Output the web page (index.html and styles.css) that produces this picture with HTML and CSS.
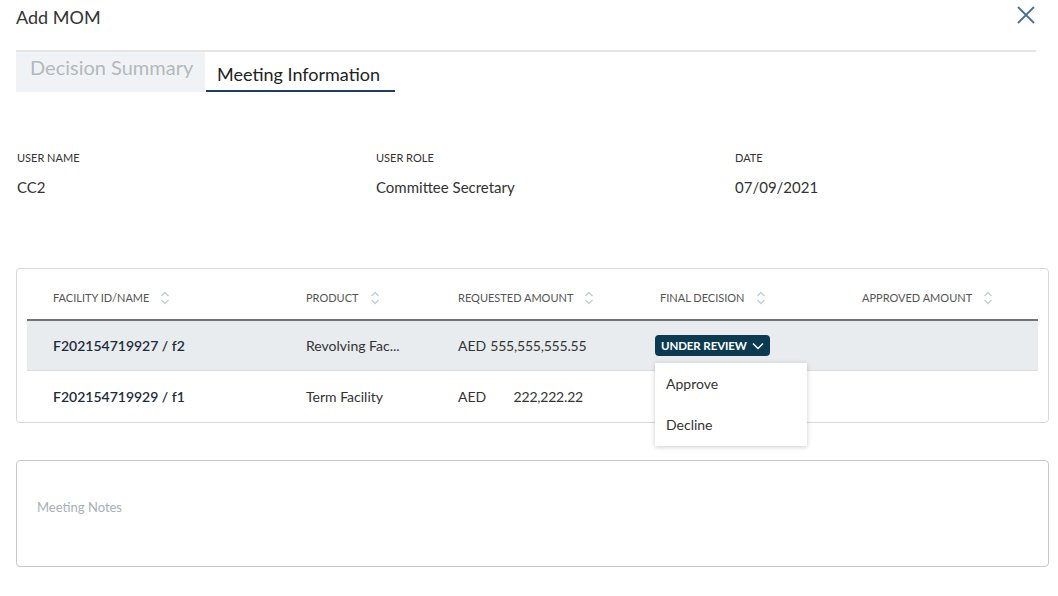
FILE: index.html
```html
<!DOCTYPE html>
<html>
<head>
<meta charset="utf-8">
<link rel="stylesheet" href="styles.css">
</head>
<body>
<div class="modal">
  <div class="header">
    <div class="title">Add MOM</div>
    <button class="close" aria-label="close">
      <svg width="20" height="20" viewBox="0 0 20 20"><path d="M2 2 L18 18 M18 2 L2 18" stroke="#4a6f98" stroke-width="1.8" fill="none"/></svg>
    </button>
  </div>
  <div class="tabs">
    <div class="tab tab-inactive">Decision Summary</div>
    <div class="tab tab-active">Meeting Information</div>
  </div>

  <div class="info">
    <div class="info-item"><div class="info-label">USER NAME</div><div class="info-value">CC2</div></div>
    <div class="info-item"><div class="info-label">USER ROLE</div><div class="info-value">Committee Secretary</div></div>
    <div class="info-item"><div class="info-label">DATE</div><div class="info-value">07/09/2021</div></div>
  </div>

  <div class="table-card">
    <div class="trow thead">
      <div class="th">FACILITY ID/NAME <span class="sort"><svg width="10" height="14" viewBox="0 0 10 14"><path d="M1.5 5 L5 1.5 L8.5 5 M1.5 9 L5 12.5 L8.5 9" stroke="#c3ccd6" stroke-width="1.4" fill="none"/></svg></span></div>
      <div class="th">PRODUCT <span class="sort"><svg width="10" height="14" viewBox="0 0 10 14"><path d="M1.5 5 L5 1.5 L8.5 5 M1.5 9 L5 12.5 L8.5 9" stroke="#c3ccd6" stroke-width="1.4" fill="none"/></svg></span></div>
      <div class="th">REQUESTED AMOUNT <span class="sort"><svg width="10" height="14" viewBox="0 0 10 14"><path d="M1.5 5 L5 1.5 L8.5 5 M1.5 9 L5 12.5 L8.5 9" stroke="#c3ccd6" stroke-width="1.4" fill="none"/></svg></span></div>
      <div class="th">FINAL DECISION <span class="sort"><svg width="10" height="14" viewBox="0 0 10 14"><path d="M1.5 5 L5 1.5 L8.5 5 M1.5 9 L5 12.5 L8.5 9" stroke="#c3ccd6" stroke-width="1.4" fill="none"/></svg></span></div>
      <div class="th">APPROVED AMOUNT <span class="sort"><svg width="10" height="14" viewBox="0 0 10 14"><path d="M1.5 5 L5 1.5 L8.5 5 M1.5 9 L5 12.5 L8.5 9" stroke="#c3ccd6" stroke-width="1.4" fill="none"/></svg></span></div>
    </div>
    <div class="trow tbody selected">
      <div class="td id">F202154719927 / f2</div>
      <div class="td">Revolving Fac...</div>
      <div class="td amount"><span class="cur">AED</span><span class="amt">555,555,555.55</span></div>
      <div class="td decision">
        <span class="badge">UNDER REVIEW <svg width="12" height="8" viewBox="0 0 12 8"><path d="M1 1.5 L6 6.5 L11 1.5" stroke="#ffffff" stroke-width="1.4" fill="none"/></svg></span>
        <div class="menu">
          <div class="menu-item">Approve</div>
          <div class="menu-item">Decline</div>
        </div>
      </div>
      <div class="td"></div>
    </div>
    <div class="trow tbody last">
      <div class="td id">F202154719929 / f1</div>
      <div class="td">Term Facility</div>
      <div class="td amount"><span class="cur">AED</span><span class="amt">222,222.22</span></div>
      <div class="td"></div>
      <div class="td"></div>
    </div>
  </div>

  <div class="notes">Meeting Notes</div>
</div>
</body>
</html>
```

FILE: styles.css
```css
* { box-sizing: border-box; }
body {
  margin: 0;
  background: #ffffff;
  font-family: "Lato", "Noto Sans", sans-serif;
  color: #333333;
}
.modal {
  width: 1058px;
  height: 596px;
  padding: 0 9px 0 16px;
}
.header {
  display: flex;
  justify-content: space-between;
  align-items: flex-start;
  width: 1020px;
  height: 52px;
  border-bottom: 2px solid #e4e4e4;
}
.title {
  font-size: 18px;
  line-height: 24px;
  padding-top: 5px;
  color: #333333;
}
.close {
  background: none;
  border: none;
  padding: 0;
  margin-top: 5px;
  width: 20px;
  height: 20px;
  cursor: pointer;
}
.tabs {
  display: flex;
  height: 40px;
}
.tab {
  width: 189px;
  height: 40px;
}
.tab-inactive {
  background: #f0f3f6;
  color: #b4b8bc;
  font-size: 20px;
  line-height: 20px;
  padding: 5px 0 0 14px;
}
.tab-active {
  margin-left: 1px;
  color: #222222;
  font-size: 18px;
  line-height: 22px;
  padding: 11px 0 0 11px;
  border-bottom: 2px solid #1e3e5c;
}
.info {
  display: grid;
  grid-template-columns: 359px 359px 1fr;
  margin-top: 59px;
}
.info-label {
  font-size: 11px;
  line-height: 14px;
  color: #333333;
  padding-left: 1px;
}
.info-value {
  margin-top: 13px;
  font-size: 15px;
  line-height: 18px;
  color: #333333;
  padding-left: 1px;
}
.table-card {
  margin-top: 72px;
  width: 1033px;
  border: 1px solid #d8d8d8;
  border-radius: 4px;
  padding: 0 10px 1px 10px;
}
.trow {
  display: grid;
  grid-template-columns: 279px 152px 202px 202px 1fr;
  align-items: center;
}
.thead {
  height: 52px;
  border-bottom: 2px solid #737373;
  padding-top: 7px;
}
.th {
  font-size: 11px;
  color: #555555;
  display: flex;
  align-items: center;
}
.th:first-child { padding-left: 26px; }
.sort {
  display: inline-flex;
  margin-left: 11px;
}
.tbody {
  height: 50px;
  font-size: 14px;
  color: #333333;
}
.tbody .td:first-child { padding-left: 26px; }
.selected {
  background: #e9ecef;
  border-bottom: 1px solid #dcdcdc;
}
.id {
  font-weight: 600;
  color: #1d2b3b;
}
.amount {
  display: flex;
  width: 125px;
}
.cur {
  margin-right: 4px;
}
.amt {
  flex: 1;
  text-align: right;
  letter-spacing: -0.2px;
}
.decision {
  position: relative;
}
.badge {
  display: inline-flex;
  align-items: center;
  gap: 5px;
  margin-left: -5px;
  height: 21px;
  padding: 0 6px 0 6px;
  background: #0c3a50;
  color: #ffffff;
  border-radius: 4px;
  font-size: 11.5px;
  font-weight: bold;
  letter-spacing: -0.1px;
}
.menu {
  position: absolute;
  left: -5px;
  top: 28px;
  width: 152px;
  height: 83px;
  background: #ffffff;
  box-shadow: 0 1px 5px rgba(0,0,0,0.2);
  z-index: 2;
}
.menu-item {
  height: 41px;
  line-height: 41px;
  padding-left: 11px;
  font-size: 14px;
  color: #333333;
}
.notes {
  margin-top: 37px;
  width: 1033px;
  height: 107px;
  border: 1px solid #c4c8cc;
  border-radius: 4px;
  padding: 38px 0 0 20px;
  font-size: 13px;
  color: #a7b0b8;
}
```
